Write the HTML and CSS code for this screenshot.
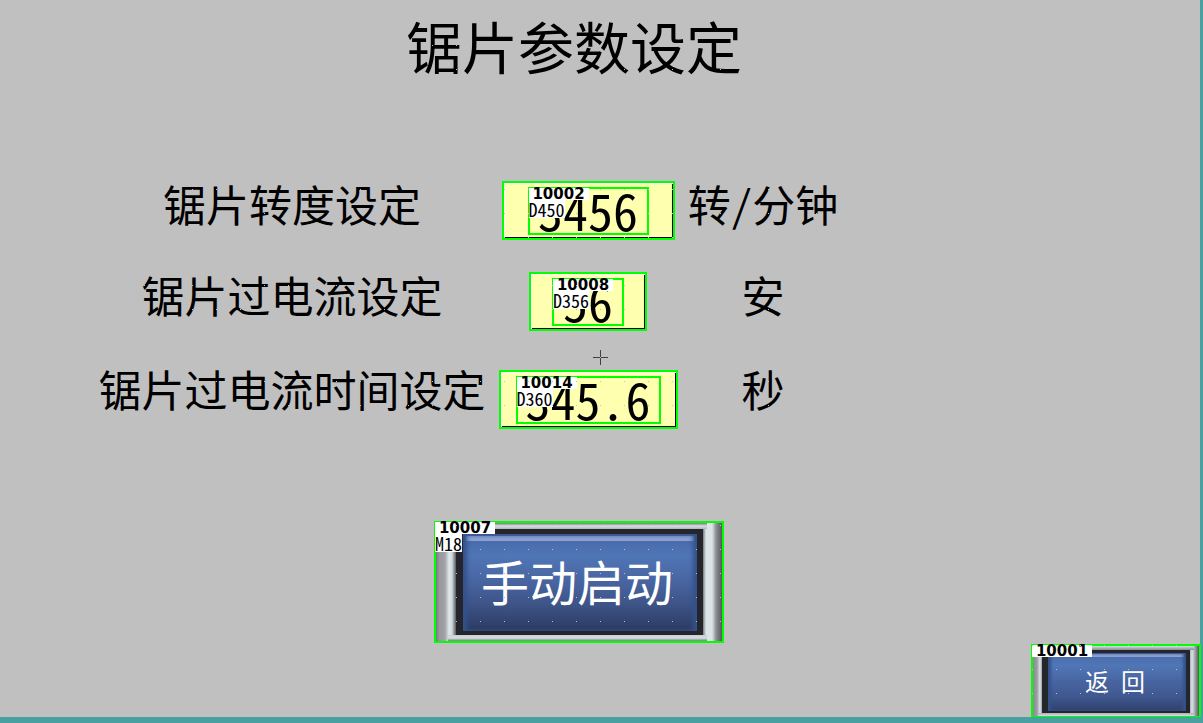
FILE: index.html
```
<!DOCTYPE html>
<html lang="zh-CN">
<head>
    <meta charset="UTF-8">
    <meta name="viewport" content="width=device-width, initial-scale=1.0">
    <title>锯片参数设定</title>
    <link rel="stylesheet" href="styles.css">
</head>
<body>
    <main class="screen">
        <h1 class="title">锯片参数设定</h1>

        <form class="params">
            <label class="name" for="speed">锯片转度设定</label>
            <div class="field">
                <div class="slot">
                    <input class="value value-speed" id="speed" type="text" value="3456">
                    <div class="tags"><span class="tag-id">10002</span><span class="tag-reg">D450</span></div>
                </div>
            </div>
            <span class="unit">转/分钟</span>

            <label class="name" for="current">锯片过电流设定</label>
            <div class="field field-current">
                <div class="slot">
                    <input class="value value-current" id="current" type="text" value="56">
                    <div class="tags"><span class="tag-id">10008</span><span class="tag-reg">D356</span></div>
                </div>
            </div>
            <span class="unit">安</span>

            <label class="name name-last" for="time">锯片过电流时间设定</label>
            <div class="field field-last">
                <div class="slot">
                    <input class="value value-time" id="time" type="text" value="345.6">
                    <div class="tags"><span class="tag-id">10014</span><span class="tag-reg">D360</span></div>
                </div>
            </div>
            <span class="unit unit-last">秒</span>
        </form>

        <div class="actions">
            <div class="key">
                <button class="btn btn-start" type="button"><span class="face">手动启动</span></button>
                <div class="tags"><span class="tag-id">10007</span><span class="tag-reg">M18</span></div>
            </div>
        </div>

        <div class="key key-back">
            <button class="btn btn-back" type="button"><span class="face">返 回</span></button>
            <div class="tags"><span class="tag-id">10001</span></div>
        </div>

        <svg class="center-mark" width="15" height="15" viewBox="0 0 15 15" aria-hidden="true">
            <path d="M7.5 0V15M0 7.5H15" stroke="#404040" fill="none"/>
        </svg>
    </main>
</body>
</html>
```

FILE: styles.css
```
* { box-sizing: border-box; }

body {
    margin: 0;
    background: #4a9fa0;
    color: #000;
    font-family: "Noto Sans Mono CJK SC", "Noto Sans CJK SC", sans-serif;
}

.screen {
    position: relative;
    min-height: calc(100vh - 6px);
    margin-right: 3px;
    padding-top: 17px;
    background: #c0c0c0;
}

/* editor grid dots, drawn over every object */
.screen::after {
    content: "";
    position: absolute;
    inset: 0;
    background: conic-gradient(from 0deg at 1px 1px, transparent 75%, #c0c0c0 0) 0 21px / 24px 24px;
    pointer-events: none;
}

.title {
    margin: 0;
    padding-right: 52px;
    font-size: 56px;
    font-weight: 400;
    line-height: 56px;
    text-align: center;
}

/* parameter rows */
.params {
    display: grid;
    grid-template-columns: 396px 176px 154px;
    column-gap: 10px;
    row-gap: 32px;
    justify-items: center;
    align-items: start;
    margin-top: 108px;
    padding-left: 94px;
}
.name, .unit {
    font-size: 43px;
    line-height: 44px;
    white-space: nowrap;
}
.field-last { margin-top: 7px; }
.name-last, .unit-last { margin-top: 3px; }

.field {
    padding: 4px 24px 3px;
    border: 2px solid #00ff00;
    background: #ffffb0;
    box-shadow: inset 1px 1px #fff, inset -1px -1px #000;
}
.field-current { padding: 4px 21px 3px; }
.field-last { padding: 4px 15px 3px; }
.slot { position: relative; }
.value {
    display: block;
    height: 48px;
    padding: 0 0 4px;
    border: 2px solid #00ff00;
    border-radius: 0;
    outline: none;
    background: transparent;
    color: #000;
    font-family: "Noto Sans Mono CJK SC", "Liberation Sans", sans-serif;
    font-size: 50px;
    line-height: 40px;
    text-align: center;
}
.value-speed { width: 121px; }
.value-current { width: 72px; }
.value-time { width: 145px; }

/* object number and register address */
.tags {
    position: absolute;
    top: 1px;
    left: 1px;
    display: flex;
    flex-direction: column;
    align-items: flex-start;
    pointer-events: none;
}
.tag-id {
    width: 60px;
    background: #fff;
    font: 15px/12px "DejaVu Sans", sans-serif;
    font-weight: 700;
    text-align: center;
}
.tag-reg {
    background: #fff;
    font: 18px/18px "Noto Sans Mono CJK SC", "Liberation Sans", sans-serif;
}

/* metal framed keys */
.actions {
    display: flex;
    justify-content: center;
    margin-top: 92px;
    padding-right: 42px;
}
.key { position: relative; }
.key-back {
    position: absolute;
    right: -1px;
    bottom: -1px;
}
.btn {
    display: block;
    border: 2px solid #00ff00;
    border-radius: 0;
    color: #fff;
    font-family: "Noto Sans Mono CJK SC", "Noto Sans CJK SC", sans-serif;
    cursor: pointer;
}
.face {
    display: flex;
    align-items: center;
    justify-content: center;
    width: 100%;
    height: 100%;
    border-style: solid;
    border-color: #25262c;
}
.btn-start {
    width: 290px;
    height: 122px;
    padding: 6px 19px 6px 20px;
    background:
        linear-gradient(#777c80, #d8dee2 3px, #b0b5ba 6px, transparent 6px) 12px 0 / 259px 100% no-repeat,
        linear-gradient(0deg, #777c80, #d8dee2 3px, #c8d0d4 6px, transparent 6px) 12px 0 / 259px 100% no-repeat,
        linear-gradient(90deg, #75757a, #96979c 3px, #a2a3a8 9px, #e0e8ec 13px, #d0d8dc 16px, #55585c 20px, #55585c 266px, #dce4e8 270px, #dce4e8 276px, #8c9094 280px, #56575c);
    font-size: 48px;
}
.btn-start .face {
    padding: 0 6px 6px 0;
    border-width: 5px 6px 4px 7px;
    background:
        linear-gradient(#8b9fd0, #8b9fd0) 3px 2px / calc(100% - 6px) 5px no-repeat,
        linear-gradient(#4665a6, #5076b6 22%, #4864a0 50%, #3c5284 75%, #2b3a60);
    box-shadow: inset 4px 0 4px #34528c, inset -4px 0 4px #34528c;
}
.btn-back {
    width: 170px;
    height: 74px;
    padding: 4px 9px 3px;
    background:
        linear-gradient(#d8dee2, #888c90 4px, transparent 4px) 5px 0 / 156px 100% no-repeat,
        linear-gradient(0deg, #d8dee2, #a8b0b4 3px, transparent 3px) 5px 0 / 156px 100% no-repeat,
        linear-gradient(90deg, #8a8b90, #9c9da2 4px, #dce4e8 7px, #777b80 10px, #777b80 155px, #dce4e8 159px, #8c9094 163px, #56575c);
    font-size: 24px;
}
.btn-back .face {
    padding: 0 4px 4px 0;
    border-width: 3px 4px 2px 6px;
    background:
        linear-gradient(#8b9fd0, #8b9fd0) 2px 1px / calc(100% - 4px) 3px no-repeat,
        linear-gradient(#4a6aac, #5076b6 22%, #4864a0 50%, #3f5890 75%, #2f416c);
    box-shadow: inset 3px 0 3px #34528c, inset -3px 0 3px #34528c;
}

.center-mark {
    position: absolute;
    top: 50%;
    left: 50%;
    margin: -9px 0 0 -7px;
}
```
